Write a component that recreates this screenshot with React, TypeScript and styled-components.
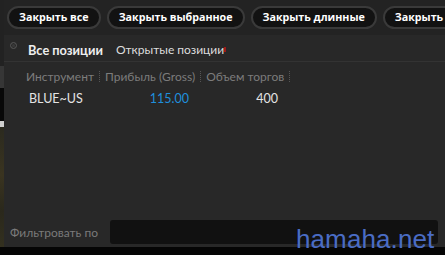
import React from "react";
import styled, { createGlobalStyle } from "styled-components";

const Global = createGlobalStyle`
  html, body { margin: 0; padding: 0; background: #000; }
  body { font-family: Lato, "Open Sans", sans-serif; }
`;

const Screen = styled.div`
  position: relative;
  width: 445px;
  height: 255px;
  overflow: hidden;
  display: flex;
  flex-direction: column;
  background: #282828;
`;

const Body = styled.div`
  flex: 1;
  display: flex;
  min-height: 0;
`;

const Strip = styled.div`
  width: 4px;
  display: flex;
  flex-direction: column;
`;

const StripPart = styled.div<{ $h?: number; $bg: string }>`
  height: ${(p) => (p.$h ? `${p.$h}px` : "auto")};
  flex: ${(p) => (p.$h ? "none" : 1)};
  background: ${(p) => p.$bg};
`;

const Main = styled.div`
  flex: 1;
  display: flex;
  flex-direction: column;
  min-width: 0;
`;

const Toolbar = styled.div`
  height: 35px;
  box-sizing: border-box;
  padding: 6px 0 0 3px;
  display: flex;
  gap: 6px;
  background: #232323;
  white-space: nowrap;
  overflow: hidden;
`;

const PillButton = styled.button`
  flex: none;
  height: 23px;
  box-sizing: border-box;
  padding: 0 10px;
  border-radius: 12px;
  border: 2px solid #3a3a3a;
  background: #121212;
  color: #fff;
  font-family: "Open Sans", sans-serif;
  font-weight: 700;
  font-size: 10.7px;
  line-height: 19px;
`;

const Tabs = styled.div`
  height: 27px;
  box-sizing: border-box;
  border-bottom: 1px solid #333;
  display: flex;
  align-items: center;
  padding-left: 6px;
`;

const Radio = styled.span`
  width: 7px;
  height: 7px;
  border-radius: 50%;
  border: 1px solid #555;
  background: #3a3a3a;
  box-sizing: border-box;
  margin-right: 11px;
  margin-top: -6px;
  box-shadow: inset 0 0 0 1px #2a2a2a;
`;

const Tab = styled.span<{ $active?: boolean }>`
  font-size: ${(p) => (p.$active ? "12.8px" : "12px")};
  font-weight: ${(p) => (p.$active ? 700 : 400)};
  color: ${(p) => (p.$active ? "#eee" : "#ddd")};
  margin-right: 13px;
  margin-top: 3px;
`;

const Caret = styled.span`
  width: 2px;
  height: 5px;
  background: #a01818;
  margin-left: -13px;
  margin-top: 3px;
`;

const HeaderRow = styled.div`
  height: 28px;
  display: flex;
  align-items: center;
  padding-left: 22px;
  font-size: 12px;
  color: #7c7c7c;
`;

const HeaderCell = styled.span`
  display: flex;
  align-items: center;
`;

const Sep = styled.span`
  width: 0;
  height: 11px;
  border-left: 1px dotted #555;
  margin: 0 5px 0 5px;
`;

const DataRow = styled.div`
  height: 17px;
  display: flex;
  align-items: center;
  font-size: 12.5px;
  color: #e4e4e4;
`;

const Cell = styled.span<{ $w: number; $align?: string; $color?: string }>`
  width: ${(p) => p.$w}px;
  text-align: ${(p) => p.$align || "left"};
  color: ${(p) => p.$color || "inherit"};
`;

const Spacer = styled.div`
  flex: 1;
`;

const FilterRow = styled.div`
  display: flex;
  align-items: center;
  padding: 0 7px 3px 6px;
  gap: 12px;
`;

const FilterLabel = styled.span`
  font-size: 12px;
  color: #7a7a7a;
`;

const FilterInput = styled.div`
  flex: 1;
  height: 24px;
  background: #111;
  border-radius: 3px;
`;

const BottomBar = styled.div`
  height: 8px;
  background: #050505;
`;

const Watermark = styled.div`
  position: absolute;
  left: 296px;
  top: 224px;
  font-family: "Liberation Sans", Arial, sans-serif;
  font-size: 26px;
  color: #4a6cc4;
  letter-spacing: 0.1px;
  line-height: 30px;
`;

export default function App() {
  return (
    <>
      <Global />
      <Screen>
        <Body>
          <Strip>
            <StripPart $h={66} $bg="#222" />
            <StripPart $h={22} $bg="#363636" />
            <StripPart $h={33} $bg="#080808" />
            <StripPart $h={6} $bg="#cfcfcf" />
            <StripPart $bg="linear-gradient(180deg,#2b2a1f,#3a3420 40%,#2a281c 70%,#33301f)" />
          </Strip>
          <Main>
            <Toolbar>
              <PillButton>Закрыть все</PillButton>
              <PillButton>Закрыть выбранное</PillButton>
              <PillButton>Закрыть длинные</PillButton>
              <PillButton>Закрыть короткие</PillButton>
            </Toolbar>
            <Tabs>
              <Radio />
              <Tab $active>Все позиции</Tab>
              <Tab>Открытые позиции</Tab>
              <Caret />
            </Tabs>
            <HeaderRow>
              <HeaderCell>Инструмент<Sep /></HeaderCell>
              <HeaderCell>Прибыль (Gross)<Sep /></HeaderCell>
              <HeaderCell>Объем торгов<Sep /></HeaderCell>
            </HeaderRow>
            <DataRow>
              <Cell $w={25} />
              <Cell $w={100}>BLUE~US</Cell>
              <Cell $w={60} $color="#1f8fdc" $align="right">115.00</Cell>
              <Cell $w={89} $align="right">400</Cell>
            </DataRow>
            <Spacer />
            <FilterRow>
              <FilterLabel>Фильтровать по</FilterLabel>
              <FilterInput />
            </FilterRow>
          </Main>
        </Body>
        <BottomBar />
        <Watermark>hamaha.net</Watermark>
      </Screen>
    </>
  );
}
